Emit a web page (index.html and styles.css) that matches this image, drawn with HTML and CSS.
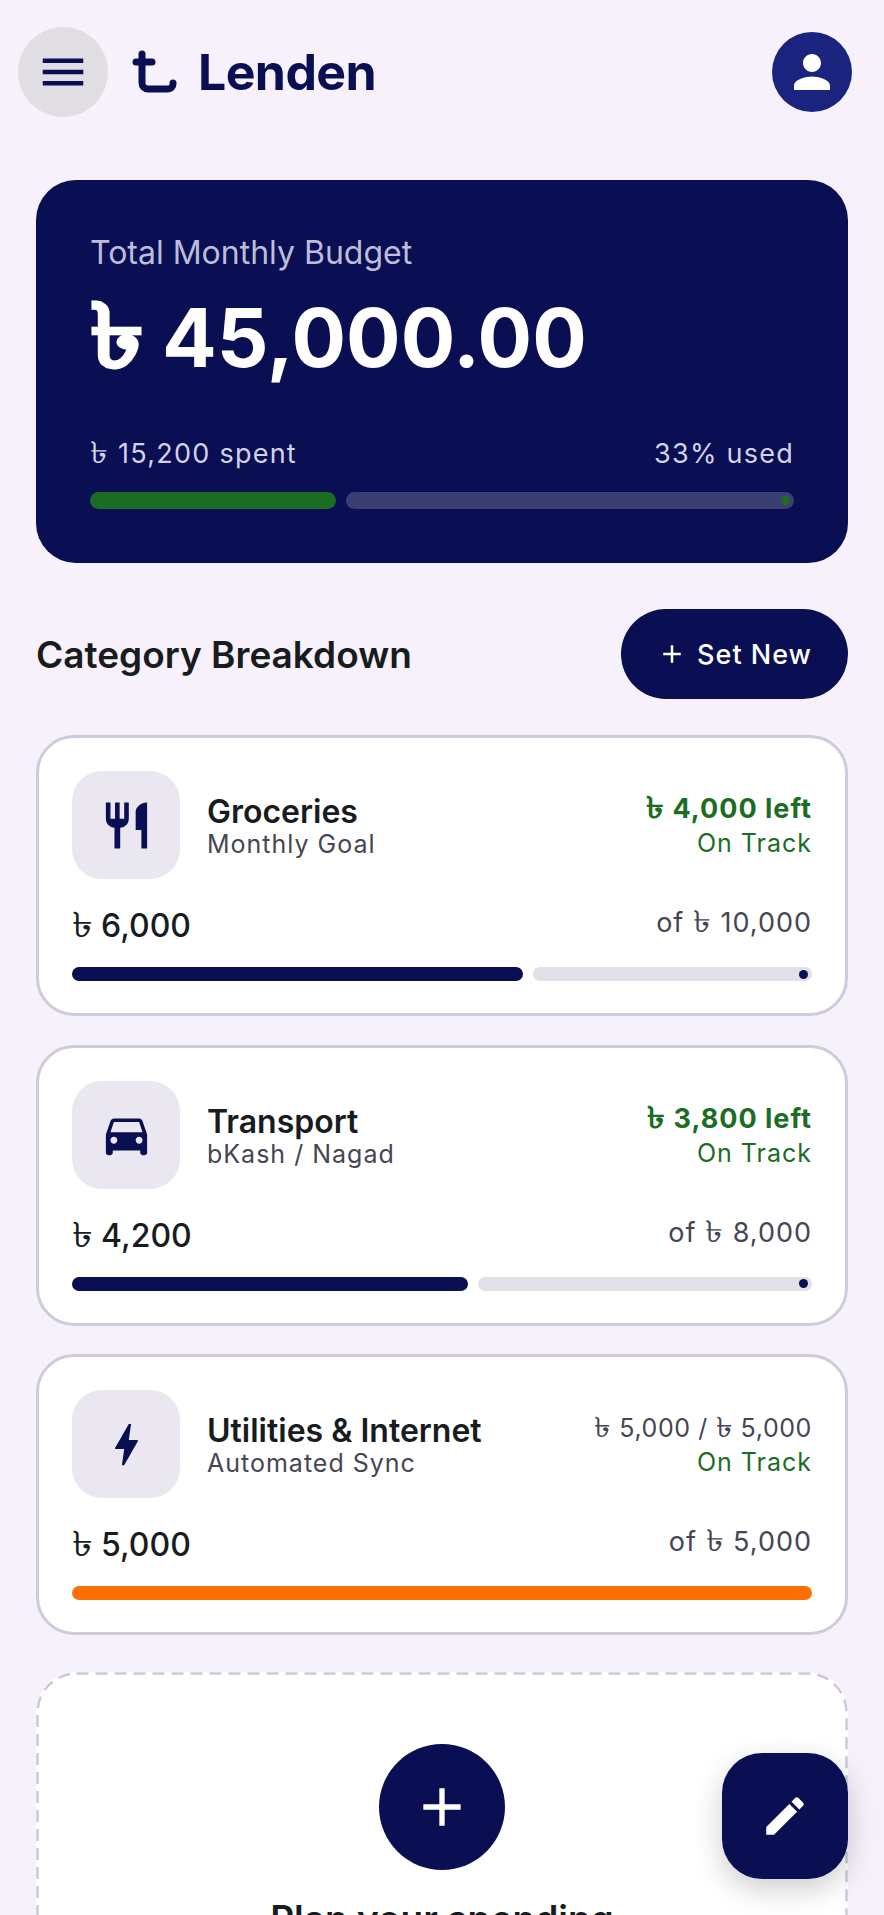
FILE: index.html
```html
<!DOCTYPE html>
<html lang="en">

<head>
    <meta charset="UTF-8">
    <meta name="viewport" content="width=device-width, initial-scale=1.0">
    <title>Lenden</title>
    <link rel="stylesheet" href="styles.css">
</head>

<body>
    <div class="app">
        <header class="topBar">
            <button class="menuButton">
                <svg width="54" height="54" viewBox="0 0 24 24"><path d="M3 18h18v-2H3v2zm0-5h18v-2H3v2zm0-7v2h18V6H3z" /></svg>
            </button>
            <svg class="logo" width="47" height="46" viewBox="0 0 47 46"><path d="M11 5v29a6 6 0 0 0 6 6h20a5 5 0 0 0 5-5v-1M5 13h16" /></svg>
            <div class="brand">Lenden</div>
            <button class="avatar">
                <svg width="54" height="54" viewBox="0 0 24 24"><path d="M12 12c2.21 0 4-1.79 4-4s-1.79-4-4-4-4 1.79-4 4 1.79 4 4 4zm0 2c-2.67 0-8 1.34-8 4v2h16v-2c0-2.66-5.33-4-8-4z" /></svg>
            </button>
        </header>

        <main class="content">
            <section class="hero">
                <div class="heroLabel">Total Monthly Budget</div>
                <div class="heroAmount"><span class="taka">৳</span> 45,000.00</div>
                <div class="heroStats">
                    <span><span class="taka">৳</span> 15,200 spent</span>
                    <span>33% used</span>
                </div>
                <div class="progress heroProgress">
                    <div class="progressFill" style="width: 35%"></div>
                    <div class="progressTrack"><i class="progressDot"></i></div>
                </div>
            </section>

            <div class="sectionHead">
                <h2>Category Breakdown</h2>
                <button class="setNew">
                    <svg width="30" height="30" viewBox="0 0 24 24"><path d="M19 13h-6v6h-2v-6H5v-2h6V5h2v6h6v2z" /></svg>
                    Set New
                </button>
            </div>

            <section class="card">
                <div class="cardTop">
                    <div class="tile">
                        <svg width="55" height="55" viewBox="0 0 24 24"><path d="M11 9H9V2H7v7H5V2H3v7c0 2.12 1.66 3.84 3.75 3.97V22h2.5v-9.03C11.34 12.84 13 11.12 13 9V2h-2v7zm5-3v8h2.5v8H21V2c-2.76 0-5 2.24-5 4z" /></svg>
                    </div>
                    <div class="cardName">
                        <div class="cardTitle">Groceries</div>
                        <div class="cardSub">Monthly Goal</div>
                    </div>
                    <div class="cardStatus">
                        <div class="left"><span class="taka">৳</span> 4,000 left</div>
                        <div class="track">On Track</div>
                    </div>
                </div>
                <div class="cardAmounts">
                    <div class="spent"><span class="taka">৳</span> 6,000</div>
                    <div class="limit">of <span class="taka">৳</span> 10,000</div>
                </div>
                <div class="progress">
                    <div class="progressFill" style="width: 61%"></div>
                    <div class="progressTrack"><i class="progressDot"></i></div>
                </div>
            </section>

            <section class="card">
                <div class="cardTop">
                    <div class="tile">
                        <svg width="55" height="55" viewBox="0 0 24 24"><path d="M18.92 6.01C18.72 5.42 18.16 5 17.5 5h-11c-.66 0-1.21.42-1.42 1.01L3 12v8c0 .55.45 1 1 1h1c.55 0 1-.45 1-1v-1h12v1c0 .55.45 1 1 1h1c.55 0 1-.45 1-1v-8l-2.08-5.99zM6.5 16c-.83 0-1.5-.67-1.5-1.5S5.67 13 6.5 13s1.5.67 1.5 1.5S7.33 16 6.5 16zm11 0c-.83 0-1.5-.67-1.5-1.5s.67-1.5 1.5-1.5 1.5.67 1.5 1.5-.67 1.5-1.5 1.5zM5 11l1.5-4.5h11L19 11H5z" /></svg>
                    </div>
                    <div class="cardName">
                        <div class="cardTitle">Transport</div>
                        <div class="cardSub">bKash / Nagad</div>
                    </div>
                    <div class="cardStatus">
                        <div class="left"><span class="taka">৳</span> 3,800 left</div>
                        <div class="track">On Track</div>
                    </div>
                </div>
                <div class="cardAmounts">
                    <div class="spent"><span class="taka">৳</span> 4,200</div>
                    <div class="limit">of <span class="taka">৳</span> 8,000</div>
                </div>
                <div class="progress">
                    <div class="progressFill" style="width: 53.5%"></div>
                    <div class="progressTrack"><i class="progressDot"></i></div>
                </div>
            </section>

            <section class="card">
                <div class="cardTop">
                    <div class="tile">
                        <svg width="55" height="55" viewBox="0 0 24 24"><path d="M11 21h-1l1-7H7.5c-.58 0-.57-.32-.38-.66.19-.34.05-.08.07-.12C8.48 10.94 10.42 7.54 13 3h1l-1 7h3.5c.49 0 .56.33.47.51l-.07.15C12.96 17.55 11 21 11 21z" /></svg>
                    </div>
                    <div class="cardName">
                        <div class="cardTitle">Utilities &amp; Internet</div>
                        <div class="cardSub">Automated Sync</div>
                    </div>
                    <div class="cardStatus">
                        <div class="paid"><span class="taka">৳</span> 5,000 / <span class="taka">৳</span> 5,000</div>
                        <div class="track">On Track</div>
                    </div>
                </div>
                <div class="cardAmounts">
                    <div class="spent"><span class="taka">৳</span> 5,000</div>
                    <div class="limit">of <span class="taka">৳</span> 5,000</div>
                </div>
                <div class="progress">
                    <div class="progressFill full"></div>
                </div>
            </section>

            <section class="planCard">
                <svg class="planBorder"><rect class="planBorderRect" /></svg>
                <div class="planCircle">
                    <svg width="64" height="64" viewBox="0 0 24 24"><path d="M19 13h-6v6h-2v-6H5v-2h6V5h2v6h6v2z" /></svg>
                </div>
                <h3>Plan your spending</h3>
            </section>
        </main>

        <button class="fab">
            <svg width="50" height="50" viewBox="0 0 24 24"><path d="M3 17.25V21h3.75L17.81 9.94l-3.75-3.75L3 17.25zM20.71 7.04c.39-.39.39-1.02 0-1.41l-2.34-2.34c-.39-.39-1.02-.39-1.41 0l-1.83 1.83 3.75 3.75 1.83-1.83z" /></svg>
        </button>
    </div>
</body>

</html>
```

FILE: styles.css
```css
html,
body {
    margin: 0;
    height: 100%;
}

body {
    background-color: #f6f1fa;
    font-family: Inter, "Noto Sans", "DejaVu Sans", sans-serif;
    color: #191c1e;
}

button {
    border: none;
    padding: 0;
    font-family: inherit;
    cursor: pointer;
}

h2,
h3 {
    margin: 0;
}

.app {
    position: relative;
    height: 100vh;
    overflow: hidden;
}

/* the fallback taka glyph is narrower than the one in the design */
.taka {
    display: inline-block;
    margin-right: 0.1em;
    font-size: 1.1em;
    line-height: 1;
    transform: scaleX(1.2);
    transform-origin: left;
}

.topBar {
    display: flex;
    align-items: center;
    height: 90px;
    padding: 27px 32px 0 18px;
}

.menuButton {
    display: flex;
    align-items: center;
    justify-content: center;
    width: 90px;
    height: 90px;
    border-radius: 50%;
    background-color: #e0dde3;
}

.menuButton svg {
    fill: #0a0e53;
}

.logo {
    margin-left: 23px;
    fill: none;
    stroke: #0a0e53;
    stroke-width: 7;
    stroke-linecap: round;
}

.brand {
    margin-left: 20px;
    font-size: 50px;
    font-weight: 700;
    color: #0a0e53;
    letter-spacing: -0.6px;
}

.avatar {
    display: flex;
    align-items: center;
    justify-content: center;
    width: 80px;
    height: 80px;
    margin-left: auto;
    border-radius: 50%;
    background-color: #1a237e;
}

.avatar svg {
    fill: white;
}

.content {
    display: flex;
    flex-direction: column;
    padding: 63px 36px 0;
}

.hero {
    height: 383px;
    box-sizing: border-box;
    padding: 53px 54px 0;
    border-radius: 40px;
    background-color: #0a0e53;
    color: white;
}

.heroLabel {
    font-size: 32px;
    line-height: 40px;
    color: #bdbdd9;
}

.heroAmount {
    margin-top: 15px;
    font-size: 81px;
    font-weight: 700;
    line-height: 100px;
}

.heroAmount .taka {
    margin-right: 0.1em;
    transform: scaleX(1.22);
    -webkit-text-stroke: 1.5px white;
}

.heroStats {
    display: flex;
    justify-content: space-between;
    margin-top: 49px;
    font-size: 27px;
    line-height: 34px;
    letter-spacing: 1.25px;
    color: #d3d3e6;
}

.progress {
    display: flex;
    gap: 10px;
    height: 14px;
}

.heroProgress {
    height: 17px;
    margin-top: 21px;
}

.progressFill {
    border-radius: 9px;
    background-color: #0a0e53;
}

.progressFill.full {
    width: 100%;
    background-color: #ff6f00;
}

.progressTrack {
    display: flex;
    flex: 1;
    align-items: center;
    justify-content: flex-end;
    padding-right: 4px;
    border-radius: 9px;
    background-color: #e0e1e6;
}

.progressDot {
    width: 9px;
    height: 9px;
    border-radius: 50%;
    background-color: #0a0e53;
}

.heroProgress .progressFill,
.heroProgress .progressDot {
    background-color: #1b6d24;
}

.heroProgress .progressTrack {
    background-color: #3b3e73;
}

.sectionHead {
    display: flex;
    align-items: center;
    justify-content: space-between;
    margin-top: 46px;
    margin-bottom: 36px;
}

.sectionHead h2 {
    font-size: 37px;
    font-weight: 600;
}

.setNew {
    display: flex;
    align-items: center;
    gap: 10px;
    height: 90px;
    padding: 0 36px;
    border-radius: 45px;
    background-color: #0a0e53;
    color: white;
    font-size: 27px;
    font-weight: 500;
    letter-spacing: 1px;
}

.setNew svg {
    fill: white;
}

.card {
    height: 281px;
    box-sizing: border-box;
    margin-bottom: 28.5px;
    padding: 33px;
    border: 3px solid #cdccdd;
    border-radius: 38px;
    background-color: white;
}

.cardTop {
    display: flex;
    align-items: center;
}

.tile {
    display: flex;
    flex-shrink: 0;
    align-items: center;
    justify-content: center;
    width: 108px;
    height: 108px;
    border-radius: 30px;
    background-color: #ebe7f0;
}

.tile svg {
    fill: #0a0e53;
}

.cardName {
    margin-left: 27px;
}

.cardTitle {
    padding-top: 4px;
    font-size: 32px;
    font-weight: 600;
    line-height: 34px;
}

.cardSub {
    font-size: 25px;
    line-height: 30px;
    letter-spacing: 1px;
    color: #454652;
}

.cardStatus {
    margin-left: auto;
    text-align: right;
}

.left {
    font-size: 27px;
    font-weight: 700;
    line-height: 36px;
    letter-spacing: 1px;
    color: #1b6d24;
}

.paid {
    font-size: 25px;
    line-height: 36px;
    letter-spacing: 0.6px;
    color: #454652;
}

.track {
    font-size: 25px;
    line-height: 32px;
    letter-spacing: 1px;
    color: #1b6d24;
}

.cardAmounts {
    display: flex;
    align-items: flex-start;
    justify-content: space-between;
    margin-top: 27px;
    margin-bottom: 21px;
}

.spent {
    font-size: 32px;
    font-weight: 500;
    line-height: 40px;
}

.limit {
    margin-top: -1px;
    font-size: 27px;
    line-height: 36px;
    letter-spacing: 1px;
    color: #454652;
}

.planCard {
    position: relative;
    display: flex;
    flex-direction: column;
    align-items: center;
    height: 400px;
    margin-top: 8.5px;
    padding-top: 72px;
    border-radius: 40px;
    background-color: white;
}

.planBorder {
    position: absolute;
    top: 0;
    left: 0;
    width: 100%;
    height: 100%;
}

.planBorderRect {
    x: 1.5px;
    y: 1.5px;
    width: calc(100% - 3px);
    height: calc(100% - 3px);
    rx: 39px;
    fill: none;
    stroke: #cbc9dd;
    stroke-width: 2.5;
    stroke-dasharray: 12 7;
}

.planCircle {
    display: flex;
    align-items: center;
    justify-content: center;
    width: 126px;
    height: 126px;
    border-radius: 50%;
    background-color: #0a0e53;
}

.planCircle svg {
    fill: white;
}

.planCard h3 {
    margin-top: 26px;
    font-size: 37px;
    font-weight: 600;
}

.fab {
    position: absolute;
    right: 36px;
    bottom: 36px;
    display: flex;
    align-items: center;
    justify-content: center;
    width: 126px;
    height: 126px;
    border-radius: 40px;
    background-color: #0a0e53;
    box-shadow: 0 10px 30px rgba(0, 0, 0, 0.2);
}

.fab svg {
    fill: white;
}
```
